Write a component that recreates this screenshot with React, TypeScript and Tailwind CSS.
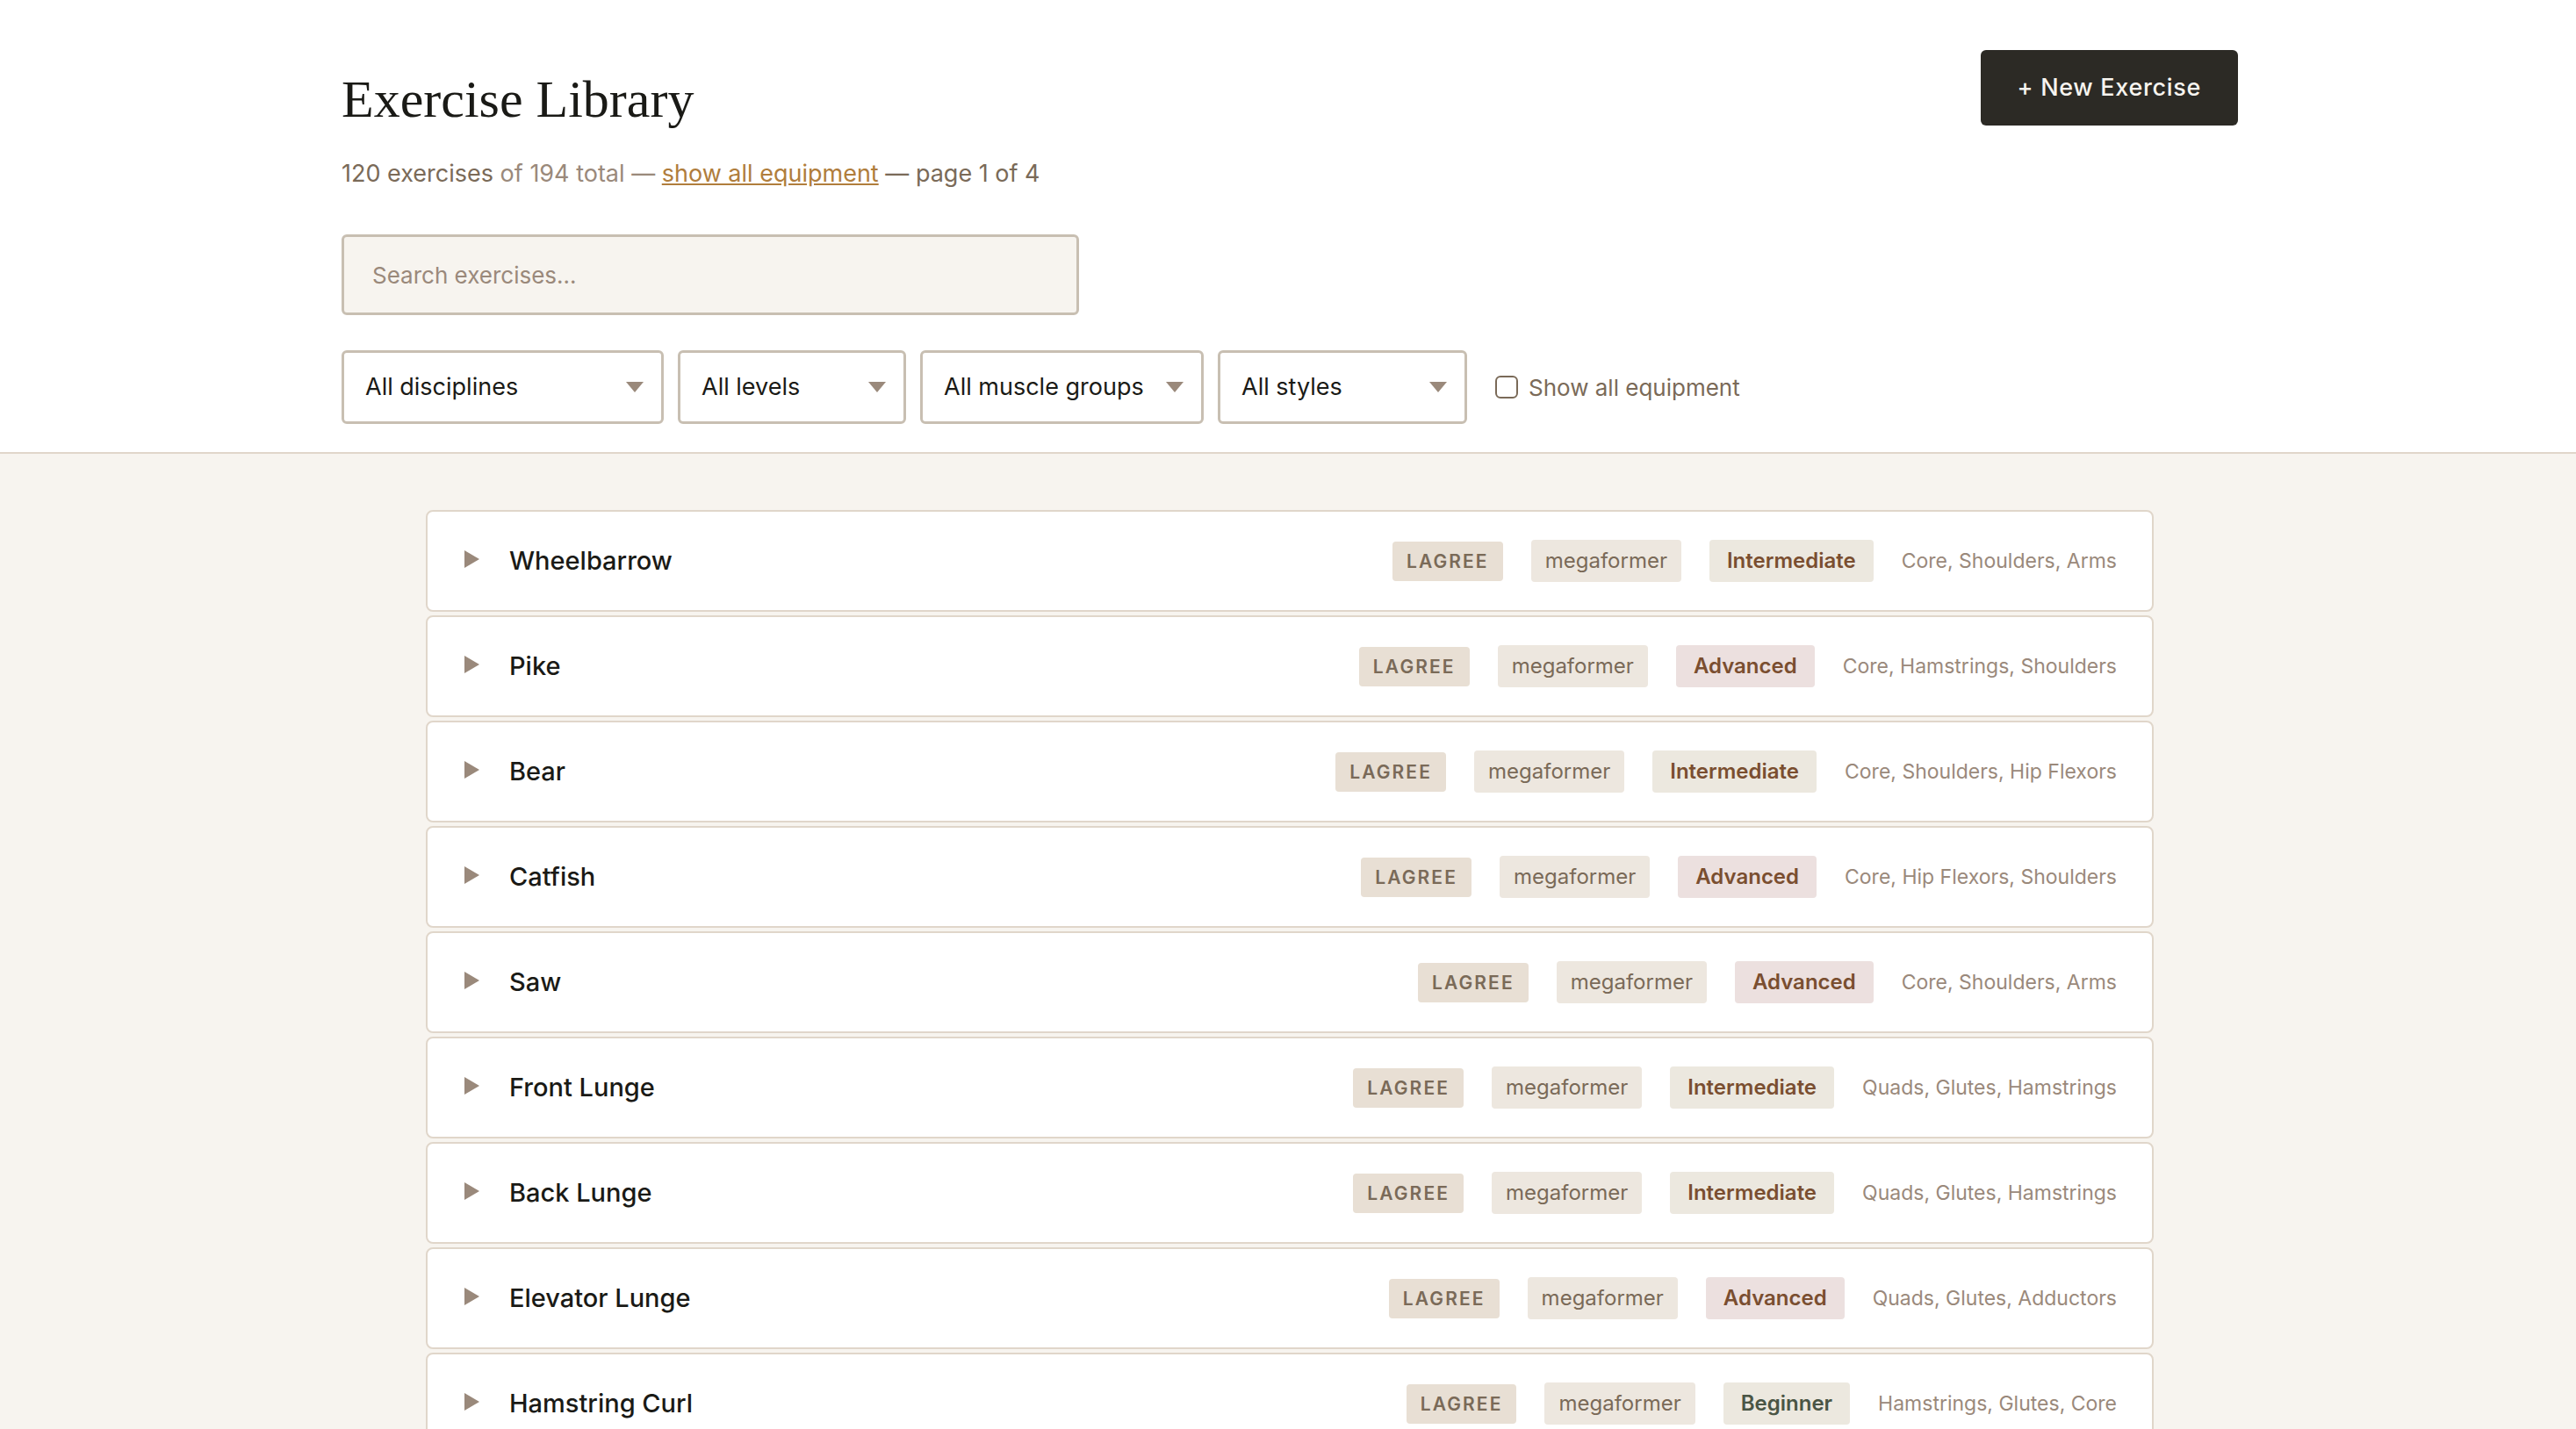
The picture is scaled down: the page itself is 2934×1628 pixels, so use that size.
import { useState } from 'react';

type Level = 'Beginner' | 'Intermediate' | 'Advanced';

interface Exercise {
  name: string;
  level: Level;
  muscles: string;
}

const exercises: Exercise[] = [
  { name: 'Wheelbarrow', level: 'Intermediate', muscles: 'Core, Shoulders, Arms' },
  { name: 'Pike', level: 'Advanced', muscles: 'Core, Hamstrings, Shoulders' },
  { name: 'Bear', level: 'Intermediate', muscles: 'Core, Shoulders, Hip Flexors' },
  { name: 'Catfish', level: 'Advanced', muscles: 'Core, Hip Flexors, Shoulders' },
  { name: 'Saw', level: 'Advanced', muscles: 'Core, Shoulders, Arms' },
  { name: 'Front Lunge', level: 'Intermediate', muscles: 'Quads, Glutes, Hamstrings' },
  { name: 'Back Lunge', level: 'Intermediate', muscles: 'Quads, Glutes, Hamstrings' },
  { name: 'Elevator Lunge', level: 'Advanced', muscles: 'Quads, Glutes, Adductors' },
  { name: 'Hamstring Curl', level: 'Beginner', muscles: 'Hamstrings, Glutes, Core' },
];

const levelStyles: Record<Level, string> = {
  Beginner: 'bg-[#ece8df] text-[#4a5545]',
  Intermediate: 'bg-[#ece8df] text-[#7a4e30]',
  Advanced: 'bg-[#ece0df] text-[#7a4e30]',
};

const filters = [
  { label: 'All disciplines', width: 'w-[367px]' },
  { label: 'All levels', width: 'w-[260px]' },
  { label: 'All muscle groups', width: 'w-[323px]' },
  { label: 'All styles', width: 'w-[284px]' },
];

const FilterSelect = ({ label, width }: { label: string; width: string }) => (
  <div className={`relative ${width}`}>
    <select
      aria-label={label}
      className="h-[84px] w-full appearance-none rounded-md border-3 border-[#c8bfb2] bg-white pl-6 text-[27px] text-[#1a1a16]"
    >
      <option>{label}</option>
    </select>
    <svg className="pointer-events-none absolute top-9 right-[23px] h-3 w-5" viewBox="0 0 20 12" fill="#9a897b">
      <path d="M0 0h20L10 12z" />
    </svg>
  </div>
);

const ExerciseRow = ({ name, level, muscles }: Exercise) => (
  <li>
    <button
      type="button"
      aria-expanded="false"
      className="flex h-[116px] w-full items-center gap-8 rounded-lg border-2 border-[#e0d6ca] bg-white px-10 text-left"
    >
      <svg className="mb-1 h-5 w-[21px]" viewBox="0 0 21 20" fill="#9a897b">
        <path d="M2 0l17 10L2 20z" />
      </svg>
      <span className="flex-1 text-[29px] font-medium text-[#1a1a16]">{name}</span>
      <span className="rounded bg-[#e8dfd4] px-4 py-2 text-[21px] leading-[29px] font-semibold tracking-widest text-[#7a6a58]">
        LAGREE
      </span>
      <span className="rounded bg-[#ede7df] px-4 py-2 text-2xl text-[#7a6a58]">megaformer</span>
      <span className={`rounded px-5 py-2 text-2xl font-semibold ${levelStyles[level]}`}>{level}</span>
      <span className="text-[23px] text-[#9a897b]">{muscles}</span>
    </button>
  </li>
);

const App = () => {
  const [showAll, setShowAll] = useState(false);

  return (
    <div className="min-h-screen bg-[#f7f4ef] font-['Inter',sans-serif]">
      <header className="border-b-2 border-[#e0d6ca] bg-white pt-[57px] pb-8 pl-1">
        <div className="mx-auto max-w-[2160px]">
          <div className="flex items-start justify-between">
            <div className="pt-4">
              <h1 className="font-['Liberation_Serif',serif] text-[60px] leading-20 text-[#1a1a16]">Exercise Library</h1>
              <p className="mt-6 text-[27px] leading-[42px] text-[#7a6a58]">
                120 exercises <span className="text-[#9a897b]">of 194 total — </span>
                <a href="#all" className="text-[#b07d3c] underline">
                  show all equipment
                </a>{' '}
                — page 1 of 4
              </p>
            </div>
            <button
              type="button"
              className="h-[86px] rounded-md bg-[#2c2a25] px-[42px] text-[27px] font-medium tracking-wide text-[#f7f4ef]"
            >
              + New Exercise
            </button>
          </div>

          <input
            type="search"
            aria-label="Search exercises"
            placeholder="Search exercises…"
            className="mt-12 block h-[92px] w-full max-w-[840px] rounded-md border-3 border-[#c8bfb2] bg-[#f7f4ef] px-8 text-[26px] placeholder:text-[#9a897b]"
          />

          <div className="mt-10 flex flex-wrap items-center gap-4">
            {filters.map((filter) => (
              <FilterSelect key={filter.label} {...filter} />
            ))}
            <label className="ml-4 flex items-center gap-3 text-[26px] text-[#7a6a58]">
              <input
                type="checkbox"
                checked={showAll}
                onChange={(e) => setShowAll(e.target.checked)}
                className="size-[26px] appearance-none rounded-md border-2 border-[#7a6a58] bg-white checked:bg-[#7a6a58]"
              />
              Show all equipment
            </label>
          </div>
        </div>
      </header>

      <main className="py-16 pl-1">
        <ul className="mx-auto flex max-w-[1968px] flex-col gap-1">
          {exercises.map((exercise) => (
            <ExerciseRow key={exercise.name} {...exercise} />
          ))}
        </ul>
      </main>
    </div>
  );
};

export default App;
